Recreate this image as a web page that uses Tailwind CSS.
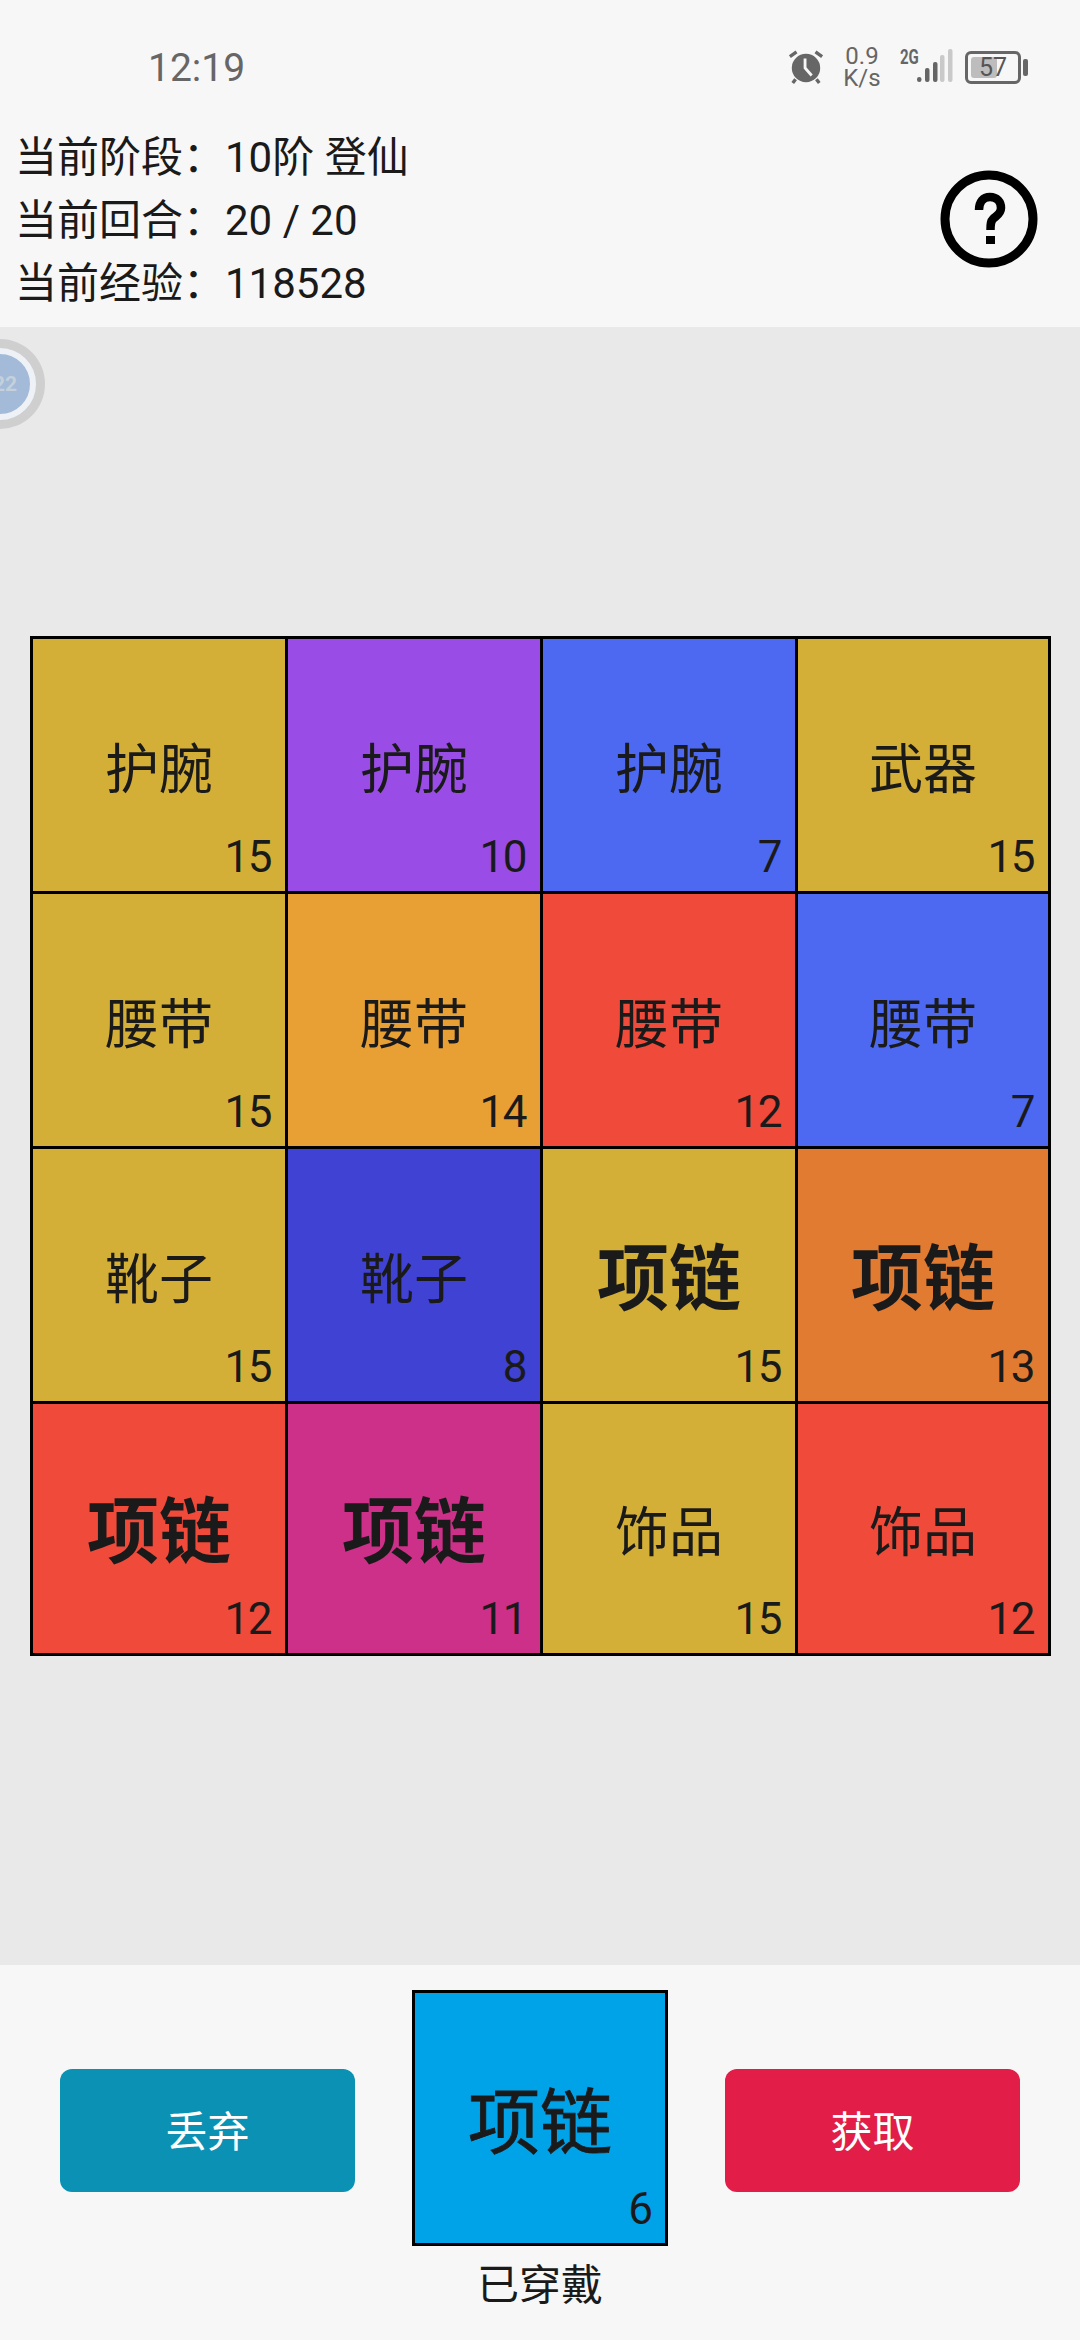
<!DOCTYPE html>
<html lang="zh-CN">
<head>
    <meta charset="UTF-8">
    <meta name="viewport" content="width=device-width, initial-scale=1.0">
    <title>装备</title>
    <script src="https://cdn.jsdelivr.net/npm/@tailwindcss/browser@4"></script>
</head>
<body class="bg-[#f7f7f7]">
<div class="relative flex flex-col w-[1080px] h-[2340px] overflow-hidden font-['Roboto','Noto_Sans_CJK_SC',sans-serif] text-[#1a1a1a]">

    <!-- 顶部 -->
    <header class="h-[327px] shrink-0 bg-[#f7f7f7]">
        <div class="flex justify-between h-[126px] pt-[43px] pl-[148px] pr-[52px] text-[#666]">
            <span class="text-[39px] leading-[50px]">12:19</span>
            <div class="flex items-center h-[50px] mt-[-1px]">
                <svg class="w-[36px] h-[36px]" viewBox="0 0 38 38">
                    <circle cx="19" cy="20" r="15" fill="#666"/>
                    <path d="M2 8 L9 3 M36 8 L29 3 M8 32 L5 36 M30 32 L33 36" stroke="#666" stroke-width="3.5" fill="none"/>
                    <path d="M18 10 V20 L25 28" stroke="#f7f7f7" stroke-width="3" fill="none"/>
                </svg>
                <div class="flex flex-col items-center w-[38px] ml-[19px] text-[24px] leading-[22px]">
                    <span>0.9</span>
                    <span>K/s</span>
                </div>
                <span class="self-start mt-[6px] ml-[19px] w-[17px] text-[20px] leading-[18px] font-bold scale-x-75 origin-left">2G</span>
                <svg class="w-[36px] h-[36px] mt-[-4px]" viewBox="0 0 36 36">
                    <rect x="0" y="30" width="4.500" height="5" rx="2.200" fill="#666"/>
                    <rect x="8" y="21" width="4.500" height="14" rx="2" fill="#666"/>
                    <rect x="16" y="15" width="4.500" height="20" rx="2" fill="#666"/>
                    <rect x="23" y="8" width="4.500" height="27" rx="2" fill="#c9c9c9"/>
                    <rect x="31" y="2" width="4.500" height="33" rx="2" fill="#c9c9c9"/>
                </svg>
                <div class="relative flex items-center justify-center w-[56px] h-[33px] ml-[12px] border-[3px] border-[#666] rounded-[6px]">
                    <div class="absolute left-[3px] top-[3px] bottom-[3px] w-[26px] bg-[#bdbdbd] rounded-[3px]"></div>
                    <span class="relative text-[25px] leading-[25px] text-[#555]">57</span>
                </div>
                <div class="w-[5px] h-[17px] ml-[2px] bg-[#666] rounded-[2px]"></div>
            </div>
        </div>
        <div class="flex justify-between items-center pl-[15px] pr-[42px]">
            <div class="text-[42px] leading-[63px]">
                <p>当前阶段：10阶 登仙</p>
                <p>当前回合：20 / 20</p>
                <p>当前经验：118528</p>
            </div>
            <svg class="w-[98px] h-[98px] mb-[4px]" viewBox="0 0 98 98">
                <circle cx="49" cy="49" r="44" fill="none" stroke="#000" stroke-width="9"/>
                <path d="M39 40 C39 32 43 27 50 27 C57 27 61 32 61 38 C61 44 56 46 53 49 C51 51 50.500 53 50.500 60" fill="none" stroke="#000" stroke-width="8.500"/>
                <rect x="46" y="66" width="9" height="8" fill="#000"/>
            </svg>
        </div>
    </header>

    <!-- 悬浮球 -->
    <div class="absolute left-[-45px] top-[339px] flex items-center justify-center w-[90px] h-[90px] rounded-full bg-[#cfcfcf]">
        <div class="flex items-center justify-end w-[72px] h-[72px] pr-[13px] rounded-full border-[6px] border-[#eef1f5] bg-[#a3bbd8] text-[#c5d0dc] text-[21px] font-bold leading-none">
            <span>22</span>
        </div>
    </div>

    <!-- 格子 -->
    <main class="flex-1 flex items-center pl-[30px] bg-[#e9e9e9]">
        <div class="grid grid-cols-[255px_255px_255px_253px] grid-rows-[255px_255px_255px_252px] w-[1021px] h-[1020px] border-r-[3px] border-b-[3px] border-black">
            <div class="relative flex items-center justify-center pt-[10px] border-l-[3px] border-t-[3px] border-black bg-[#d4af37] text-[54px]">护腕<span class="absolute right-[14px] bottom-[11px] text-[44px] leading-[45px] tracking-[-1.5px]">15</span></div>
            <div class="relative flex items-center justify-center pt-[10px] border-l-[3px] border-t-[3px] border-black bg-[#994de6] text-[54px]">护腕<span class="absolute right-[14px] bottom-[11px] text-[44px] leading-[45px] tracking-[-1.5px]">10</span></div>
            <div class="relative flex items-center justify-center pt-[10px] border-l-[3px] border-t-[3px] border-black bg-[#4d69f2] text-[54px]">护腕<span class="absolute right-[14px] bottom-[11px] text-[44px] leading-[45px] tracking-[-1.5px]">7</span></div>
            <div class="relative flex items-center justify-center pt-[10px] border-l-[3px] border-t-[3px] border-black bg-[#d4af37] text-[54px]">武器<span class="absolute right-[14px] bottom-[11px] text-[44px] leading-[45px] tracking-[-1.5px]">15</span></div>

            <div class="relative flex items-center justify-center pt-[10px] border-l-[3px] border-t-[3px] border-black bg-[#d4af37] text-[54px]">腰带<span class="absolute right-[14px] bottom-[11px] text-[44px] leading-[45px] tracking-[-1.5px]">15</span></div>
            <div class="relative flex items-center justify-center pt-[10px] border-l-[3px] border-t-[3px] border-black bg-[#e8a035] text-[54px]">腰带<span class="absolute right-[14px] bottom-[11px] text-[44px] leading-[45px] tracking-[-1.5px]">14</span></div>
            <div class="relative flex items-center justify-center pt-[10px] border-l-[3px] border-t-[3px] border-black bg-[#ef4a3a] text-[54px]">腰带<span class="absolute right-[14px] bottom-[11px] text-[44px] leading-[45px] tracking-[-1.5px]">12</span></div>
            <div class="relative flex items-center justify-center pt-[10px] border-l-[3px] border-t-[3px] border-black bg-[#4d69f2] text-[54px]">腰带<span class="absolute right-[14px] bottom-[11px] text-[44px] leading-[45px] tracking-[-1.5px]">7</span></div>

            <div class="relative flex items-center justify-center pt-[10px] border-l-[3px] border-t-[3px] border-black bg-[#d4af37] text-[54px]">靴子<span class="absolute right-[14px] bottom-[11px] text-[44px] leading-[45px] tracking-[-1.5px]">15</span></div>
            <div class="relative flex items-center justify-center pt-[10px] border-l-[3px] border-t-[3px] border-black bg-[#4042d4] text-[54px]">靴子<span class="absolute right-[14px] bottom-[11px] text-[44px] leading-[45px] tracking-[-1.5px]">8</span></div>
            <div class="relative flex items-center justify-center pt-[9px] border-l-[3px] border-t-[3px] border-black bg-[#d4af37] text-[72px] font-bold">项链<span class="absolute right-[14px] bottom-[11px] text-[44px] leading-[45px] tracking-[-1.5px] font-normal">15</span></div>
            <div class="relative flex items-center justify-center pt-[9px] border-l-[3px] border-t-[3px] border-black bg-[#e27b32] text-[72px] font-bold">项链<span class="absolute right-[14px] bottom-[11px] text-[44px] leading-[45px] tracking-[-1.5px] font-normal">13</span></div>

            <div class="relative flex items-center justify-center pt-[9px] border-l-[3px] border-t-[3px] border-black bg-[#ef4a3a] text-[72px] font-bold">项链<span class="absolute right-[14px] bottom-[11px] text-[44px] leading-[45px] tracking-[-1.5px] font-normal">12</span></div>
            <div class="relative flex items-center justify-center pt-[9px] border-l-[3px] border-t-[3px] border-black bg-[#cc3088] text-[72px] font-bold">项链<span class="absolute right-[14px] bottom-[11px] text-[44px] leading-[45px] tracking-[-1.5px] font-normal">11</span></div>
            <div class="relative flex items-center justify-center pt-[10px] border-l-[3px] border-t-[3px] border-black bg-[#d4af37] text-[54px]">饰品<span class="absolute right-[14px] bottom-[11px] text-[44px] leading-[45px] tracking-[-1.5px]">15</span></div>
            <div class="relative flex items-center justify-center pt-[10px] border-l-[3px] border-t-[3px] border-black bg-[#ef4a3a] text-[54px]">饰品<span class="absolute right-[14px] bottom-[11px] text-[44px] leading-[45px] tracking-[-1.5px]">12</span></div>
        </div>
    </main>

    <!-- 底部 -->
    <footer class="flex justify-between items-start h-[375px] shrink-0 px-[60px] pt-[25px] bg-[#f7f7f7]">
        <button class="w-[295px] h-[123px] mt-[79px] pt-[4px] rounded-[12px] bg-[#0a91b4] text-white text-[42px]">丢弃</button>
        <div class="flex flex-col items-center">
            <div class="relative flex items-center justify-center w-[256px] h-[256px] pt-[12px] border-[3px] border-black bg-[#00a2e8] text-[72px] [-webkit-text-stroke:0.8px_#1a1a1a]">项链<span class="absolute right-[12px] bottom-[11px] text-[44px] leading-[45px] [-webkit-text-stroke:0]">6</span></div>
            <p class="mt-[19px] text-[42px] leading-[42px]">已穿戴</p>
        </div>
        <button class="w-[295px] h-[123px] mt-[79px] pt-[4px] rounded-[12px] bg-[#e11d48] text-white text-[42px]">获取</button>
    </footer>
</div>
</body>
</html>
